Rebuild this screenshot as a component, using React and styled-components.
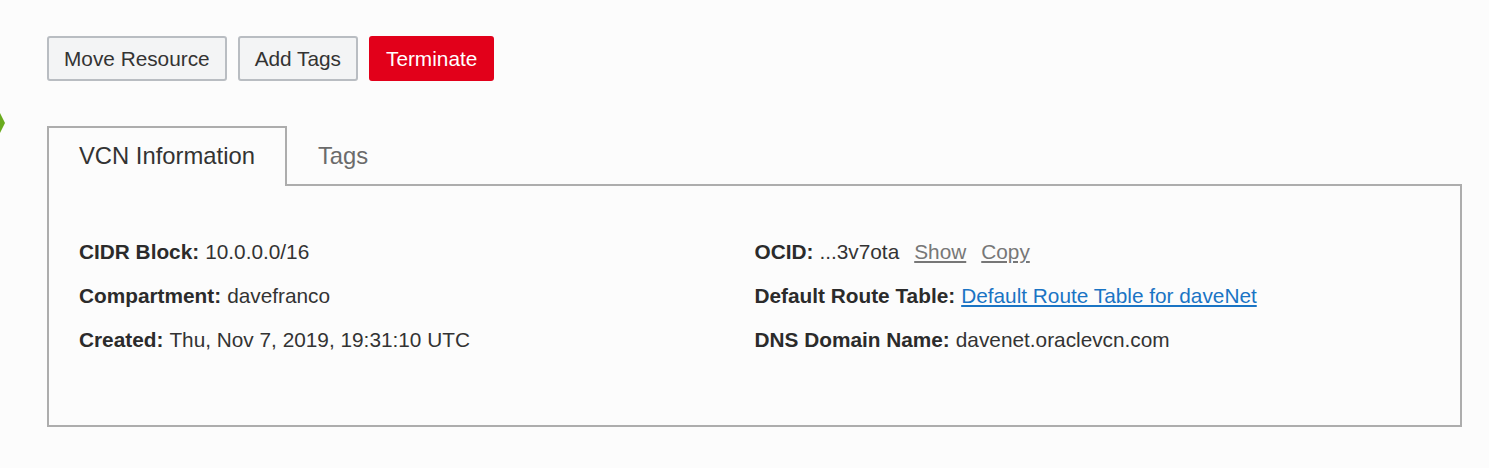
import React, { useState } from "react";
import styled, { createGlobalStyle } from "styled-components";

const GlobalStyle = createGlobalStyle`
  body {
    margin: 0;
    background: #fcfcfc;
    font-family: "Liberation Sans", Arial, sans-serif;
    color: #333;
  }
`;

const Page = styled.div`
  position: relative;
  padding: 36px 27px 40px 47px;
`;

// partially visible side marker at the left edge
const SideMarker = styled.div`
  position: absolute;
  left: 0;
  top: 113px;
  width: 0;
  height: 0;
  border-top: 10px solid transparent;
  border-bottom: 10px solid transparent;
  border-left: 5px solid #6aab1e;
`;

const Toolbar = styled.div`
  display: flex;
  gap: 11px;
`;

const Button = styled.button`
  height: 45px;
  padding: 0 15px;
  font-family: "Liberation Sans", Arial, sans-serif;
  font-size: 20.8px;
  border-radius: 3px;
  border: 2px solid ${({ danger }) => (danger ? "#e2001a" : "#b9bdc2")};
  background: ${({ danger }) => (danger ? "#e2001a" : "#f3f4f5")};
  color: ${({ danger }) => (danger ? "#fff" : "#333")};
  cursor: pointer;
`;

const TabList = styled.div`
  display: flex;
  margin-top: 45px;
`;

const Tab = styled.div`
  height: 60px;
  padding: 0 ${({ active }) => (active ? "30px" : "29px")} 3px;
  box-sizing: border-box;
  display: flex;
  align-items: center;
  font-size: 23.8px;
  color: ${({ active }) => (active ? "#333" : "#6b6b6b")};
  border: 2px solid ${({ active }) => (active ? "#adadad" : "transparent")};
  border-bottom: none;
  background: ${({ active }) => (active ? "#fcfcfc" : "transparent")};
  margin-bottom: -2px;
  position: relative;
  z-index: 1;
  cursor: pointer;
`;

const Panel = styled.div`
  border: 2px solid #adadad;
  padding: 44px 30px 63px;
  display: grid;
  grid-template-columns: 1fr 1fr;
`;

const Column = styled.div`
  display: flex;
  flex-direction: column;
`;

const Row = styled.div`
  line-height: 44px;
  font-size: 20.8px;
  color: #333;
  white-space: nowrap;
`;

const Label = styled.b`
  font-weight: bold;
  color: #2b2b2b;
  margin-right: 6px;
`;

const Action = styled.a`
  color: #777;
  text-decoration: underline;
  margin-left: 15px;
  cursor: pointer;
`;

const Link = styled.a`
  color: #1a74c4;
  text-decoration: underline;
  cursor: pointer;
`;

export default function App() {
  const [tab, setTab] = useState("info");

  return (
    <Page>
      <GlobalStyle />
      <SideMarker />
      <Toolbar>
        <Button>Move Resource</Button>
        <Button>Add Tags</Button>
        <Button danger>Terminate</Button>
      </Toolbar>

      <TabList>
        <Tab active={tab === "info"} onClick={() => setTab("info")}>
          VCN Information
        </Tab>
        <Tab active={tab === "tags"} onClick={() => setTab("tags")}>
          Tags
        </Tab>
      </TabList>

      <Panel>
        <Column>
          <Row>
            <Label>CIDR Block:</Label>10.0.0.0/16
          </Row>
          <Row>
            <Label>Compartment:</Label>davefranco
          </Row>
          <Row>
            <Label>Created:</Label>Thu, Nov 7, 2019, 19:31:10 UTC
          </Row>
        </Column>
        <Column>
          <Row>
            <Label>OCID:</Label>...3v7ota
            <Action>Show</Action>
            <Action>Copy</Action>
          </Row>
          <Row>
            <Label>Default Route Table:</Label>
            <Link>Default Route Table for daveNet</Link>
          </Row>
          <Row>
            <Label>DNS Domain Name:</Label>davenet.oraclevcn.com
          </Row>
        </Column>
      </Panel>
    </Page>
  );
}
